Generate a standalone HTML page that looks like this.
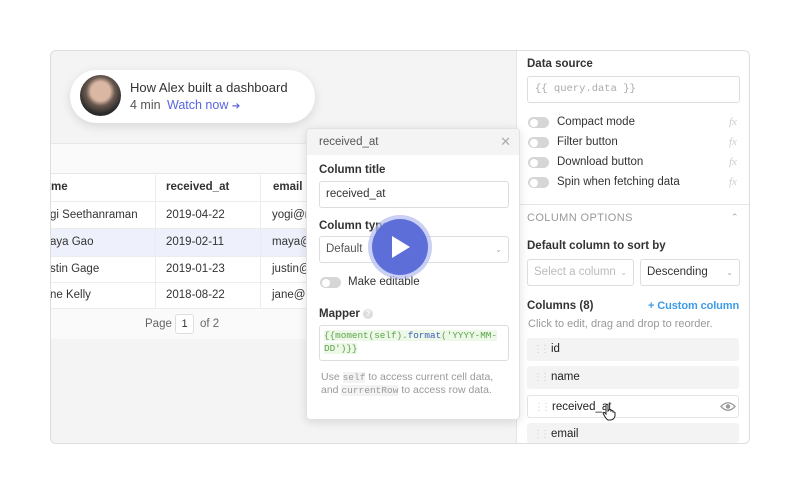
<!DOCTYPE html>
<html><head><style>
*{box-sizing:border-box;margin:0;padding:0}
body{width:800px;height:494px;background:#fff;font-family:"Liberation Sans",sans-serif;color:#333;position:relative;overflow:hidden}
.a{position:absolute}
.mono{font-family:"Liberation Mono",monospace}
.tog{position:absolute;width:21px;height:11px;border-radius:6px;background:#d6d6d6}
.tog:after{content:"";position:absolute;left:1.5px;top:1.5px;width:8px;height:8px;border-radius:50%;background:#fff}
.fx{position:absolute;font-style:italic;color:#ccc;font-size:11px;font-family:"Liberation Serif",serif}
.col{position:absolute;left:527px;width:212px;height:23px;background:#f3f3f3;border-radius:3px;font-size:11.5px;color:#222;line-height:23px;padding-left:24px}
.col:before{content:"⋮⋮";position:absolute;left:6px;color:#ccc;font-size:10px;letter-spacing:-3px}
.cell{position:absolute;font-size:11.5px;color:#333}
</style></head><body>
<div class="a" style="left:50px;top:50px;width:700px;height:394px;border:1px solid #ddd;border-radius:6px;background:#f4f4f4;overflow:hidden">
 <div class="a" style="left:0;top:92px;width:470px;height:196px;background:#fafafa;border-top:1px solid #e8e8e8"></div>
 <div class="a" style="left:0;top:122px;width:470px;height:136px;background:#fff;border-top:1px solid #e6e6e6"></div>
 <div class="a" style="left:0;top:177px;width:470px;height:28px;background:#eef1fb"></div>
 <div class="a" style="left:0;top:150px;width:470px;border-top:1px solid #ececec"></div>
 <div class="a" style="left:0;top:177px;width:470px;border-top:1px solid #ececec"></div>
 <div class="a" style="left:0;top:205px;width:470px;border-top:1px solid #ececec"></div>
 <div class="a" style="left:0;top:231px;width:470px;border-top:1px solid #ececec"></div>
 <div class="a" style="left:0;top:257px;width:470px;border-top:1px solid #ececec"></div>
 <div class="a" style="left:104px;top:122px;height:136px;border-left:1px solid #ececec"></div>
 <div class="a" style="left:209px;top:122px;height:136px;border-left:1px solid #ececec"></div>
 <div class="cell" style="left:0;top:130px;font-weight:bold">me</div>
 <div class="cell" style="left:115px;top:130px;font-weight:bold">received_at</div>
 <div class="cell" style="left:222px;top:130px;font-weight:bold">email</div>
 <div class="cell" style="left:-1px;top:158px">gi Seethanraman</div>
 <div class="cell" style="left:-1px;top:185px">aya Gao</div>
 <div class="cell" style="left:-1px;top:212px">stin Gage</div>
 <div class="cell" style="left:-1px;top:238px">ne Kelly</div>
 <div class="cell" style="left:115px;top:158px">2019-04-22</div>
 <div class="cell" style="left:115px;top:185px">2019-02-11</div>
 <div class="cell" style="left:115px;top:212px">2019-01-23</div>
 <div class="cell" style="left:115px;top:238px">2018-08-22</div>
 <div class="cell" style="left:221px;top:158px">yogi@r</div>
 <div class="cell" style="left:221px;top:185px">maya@</div>
 <div class="cell" style="left:221px;top:212px">justin@</div>
 <div class="cell" style="left:221px;top:238px">jane@r</div>
 <div class="cell" style="left:94px;top:267px;color:#666">Page</div>
 <div class="a" style="left:124px;top:263px;width:19px;height:20px;border:1px solid #ddd;border-radius:3px;background:#fff;font-size:11px;text-align:center;line-height:18px">1</div>
 <div class="cell" style="left:149px;top:267px;color:#666">of 2</div>
 <div class="a" style="left:465px;top:0;width:235px;height:394px;background:#fff;border-left:1px solid #e4e4e4"></div>
 <div class="a" style="left:465px;top:153px;width:235px;border-top:1px solid #e6e6e6"></div>
</div>

<div class="a" style="left:70px;top:70px;width:245px;height:53px;border-radius:27px;background:#fff;box-shadow:0 3px 10px rgba(0,0,0,.12)"></div>
<div class="a" style="left:80px;top:75px;width:41px;height:41px;border-radius:50%;background:radial-gradient(circle at 50% 40%,#d9b7a3 0 30%,#6b5a50 45%,#2a2a2a 70%)"></div>
<div class="a" style="left:130px;top:80px;font-size:13px;color:#333">How Alex built a dashboard</div>
<div class="a" style="left:130px;top:98px;font-size:12.5px;color:#555">4 min</div>
<div class="a" style="left:167px;top:98px;font-size:12.5px;color:#5865e0">Watch now <span style="font-size:10px">➔</span></div>

<div class="a" style="left:527px;top:58px;font-size:11.5px;font-weight:bold;color:#333">Data source</div>
<div class="a mono" style="left:527px;top:76px;width:213px;height:27px;border:1px solid #ddd;border-radius:3px;font-size:10.5px;color:#aaa;line-height:25px;padding-left:7px">{{ query.data }}</div>
<div class="tog" style="left:528px;top:117px"></div><div class="a" style="left:557px;top:116px;font-size:11.5px">Compact mode</div><div class="fx" style="top:116px;left:729px">fx</div>
<div class="tog" style="left:528px;top:137px"></div><div class="a" style="left:557px;top:136px;font-size:11.5px">Filter button</div><div class="fx" style="top:136px;left:729px">fx</div>
<div class="tog" style="left:528px;top:157px"></div><div class="a" style="left:557px;top:156px;font-size:11.5px">Download button</div><div class="fx" style="top:156px;left:729px">fx</div>
<div class="tog" style="left:528px;top:177px"></div><div class="a" style="left:557px;top:176px;font-size:11.5px">Spin when fetching data</div><div class="fx" style="top:176px;left:729px">fx</div>
<div class="a" style="left:527px;top:212px;font-size:11px;color:#999;letter-spacing:.4px">COLUMN OPTIONS</div>
<div class="a" style="left:731px;top:212px;font-size:9px;color:#aaa">⌃</div>
<div class="a" style="left:527px;top:240px;font-size:11.5px;font-weight:bold">Default column to sort by</div>
<div class="a" style="left:527px;top:259px;width:107px;height:27px;border:1px solid #ddd;border-radius:3px;font-size:11.5px;color:#bbb;line-height:25px;padding-left:6px">Select a column<span style="position:absolute;right:6px;font-size:8px">⌄</span></div>
<div class="a" style="left:640px;top:259px;width:100px;height:27px;border:1px solid #ddd;border-radius:3px;font-size:11.5px;color:#333;line-height:25px;padding-left:6px">Descending<span style="position:absolute;right:6px;font-size:8px;color:#aaa">⌄</span></div>
<div class="a" style="left:527px;top:300px;font-size:11.5px;font-weight:bold">Columns (8)</div>
<div class="a" style="left:648px;top:300px;font-size:11px;font-weight:bold;color:#3d9be9;letter-spacing:-.1px">+ Custom column</div>
<div class="a" style="left:528px;top:318px;font-size:11px;color:#999">Click to edit, drag and drop to reorder.</div>
<div class="col" style="top:338px">id</div>
<div class="col" style="top:366px">name</div>
<div class="col" style="top:395px;background:#fff;border:1px solid #e4e4e4">received_at</div>
<svg class="a" style="left:720px;top:401px" width="16" height="11"><path d="M1 5.5 Q8 -2 15 5.5 Q8 13 1 5.5Z" fill="none" stroke="#999" stroke-width="1.3"/><circle cx="8" cy="5.5" r="2.2" fill="#999"/></svg>
<svg class="a" style="left:602px;top:403px" width="14" height="18"><path d="M4 2 Q5 0.5 6 2 L6 8 L7 7 Q8 6 9 7 L9 8 Q10 7 11 8 L11 9 Q12 8.5 13 9.5 L13 13 Q12 17 8 17 L6 17 Q4 16 2 12 L1 10 Q1 9 2.5 9.5 L4 11Z" fill="#fff" stroke="#222" stroke-width="1"/></svg>
<div class="col" style="top:423px;height:20px">email</div>

<div class="a" style="left:306px;top:128px;width:214px;height:292px;background:#fff;border:1px solid #e2e2e2;border-radius:4px;box-shadow:0 2px 10px rgba(0,0,0,.12);overflow:hidden">
 <div class="a" style="left:0;top:0;width:214px;height:26px;background:#f4f4f4;font-size:11.5px;color:#555;line-height:26px;padding-left:12px">received_at<span style="position:absolute;right:10px;color:#aaa;font-size:13px">✕</span></div>
 <div class="a" style="left:12px;top:35px;font-size:11.5px;font-weight:bold">Column title</div>
 <div class="a" style="left:12px;top:52px;width:190px;height:27px;border:1px solid #ddd;border-radius:3px;font-size:11.5px;line-height:25px;padding-left:6px">received_at</div>
 <div class="a" style="left:12px;top:91px;font-size:11.5px;font-weight:bold">Column type</div>
 <div class="a" style="left:12px;top:107px;width:190px;height:27px;border:1px solid #ddd;border-radius:3px;font-size:11.5px;color:#555;line-height:25px;padding-left:6px">Default<span style="position:absolute;right:6px;font-size:8px;color:#aaa">⌄</span></div>
 <div class="tog" style="left:13px;top:148px"></div>
 <div class="a" style="left:41px;top:147px;font-size:11.5px">Make editable</div>
 <div class="a" style="left:12px;top:179px;font-size:11.5px;font-weight:bold">Mapper <span style="display:inline-block;width:10px;height:10px;border-radius:50%;background:#ddd;color:#fff;font-size:8px;text-align:center;line-height:10px;vertical-align:middle">?</span></div>
 <div class="a" style="left:12px;top:196px;width:190px;height:36px;border:1px solid #ddd;border-radius:3px"></div>
 <div class="a mono" style="left:17px;top:200px;font-size:9.3px;line-height:13px;color:#5aa54b"><span style="background:#eef8e8">{{moment(self).<span style="color:#3c5db8">format</span>('YYYY-MM-</span><br><span style="background:#eef8e8">DD')}}</span></div>
 <div class="a" style="left:14px;top:242px;font-size:10.5px;line-height:13px;color:#999">Use <span class="mono" style="background:#f3f3f3;font-size:9.5px">self</span> to access current cell data,<br>and <span class="mono" style="background:#f3f3f3;font-size:9.5px">currentRow</span> to access row data.</div>
</div>

<div class="a" style="left:368px;top:215px;width:64px;height:64px;border-radius:50%;background:rgba(180,188,240,.7)"></div>
<div class="a" style="left:372px;top:219px;width:56px;height:56px;border-radius:50%;background:#5d6ed8"></div>
<svg class="a" style="left:390px;top:235px" width="22" height="24"><path d="M2 1 L20 12 L2 23 Z" fill="#fff"/></svg>
</body></html>
